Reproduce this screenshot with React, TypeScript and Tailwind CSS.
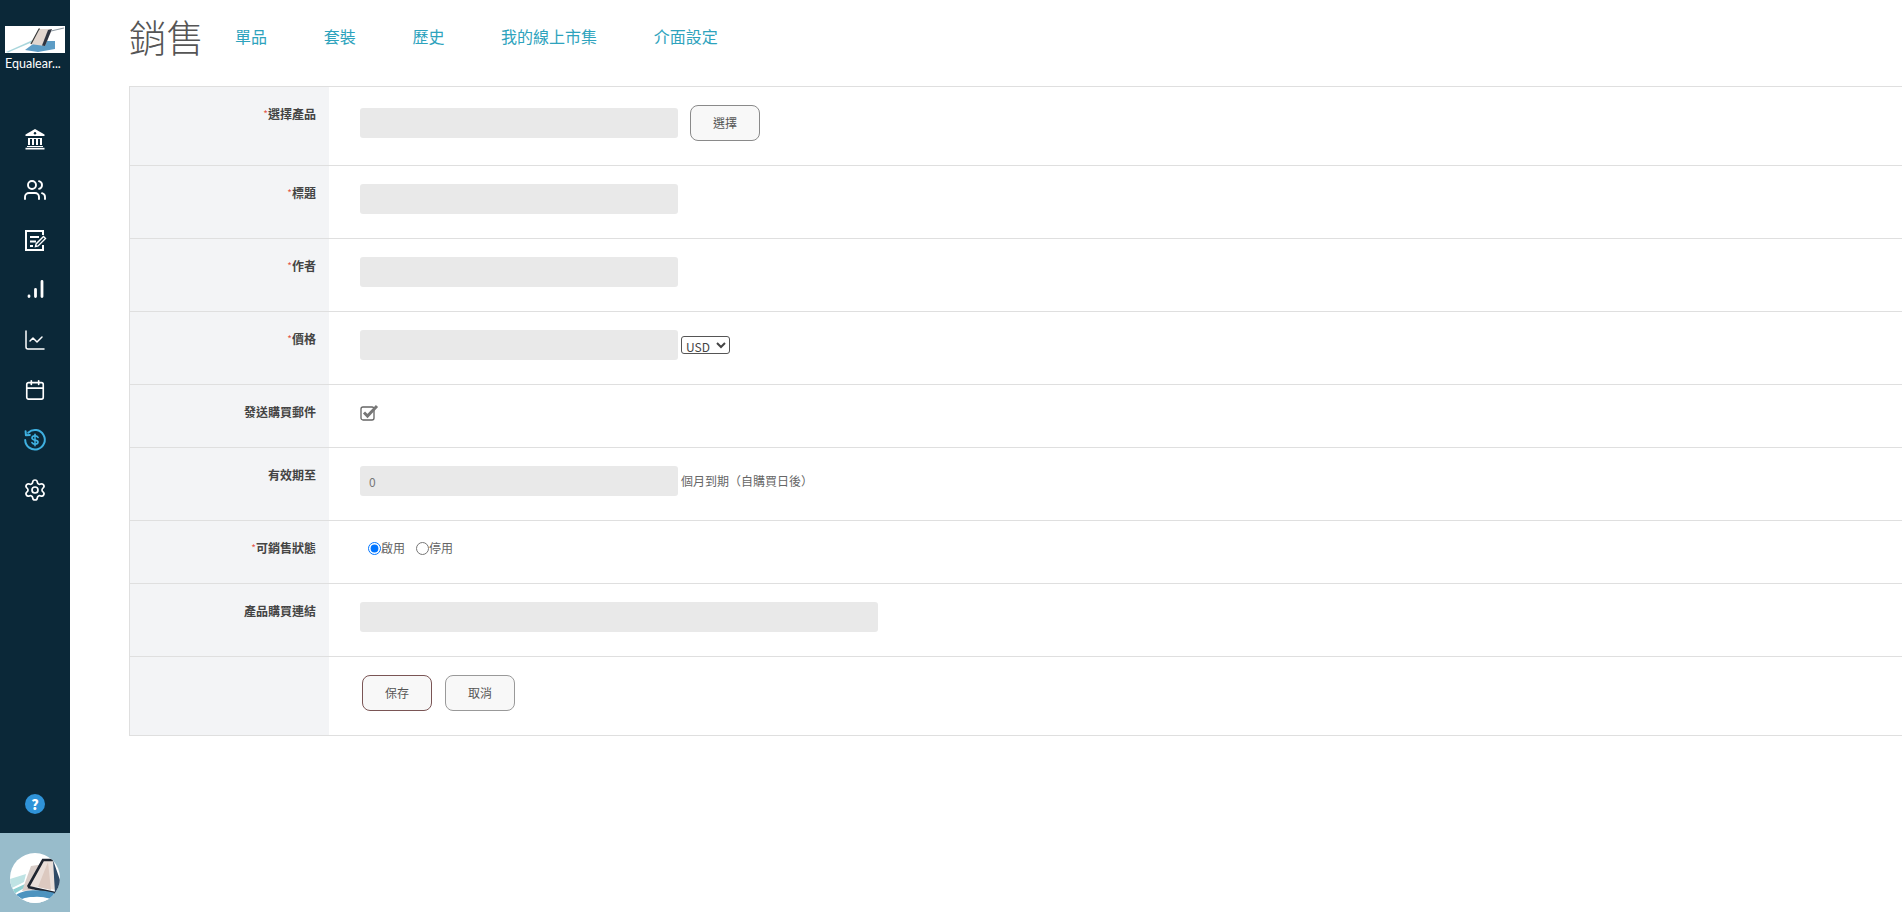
import React from "react";
import { Users, ChartLine, Calendar, Settings } from "lucide-react";

const Req = () => <span className="text-[#e4544a] font-normal text-[10px] align-top">*</span>;

function Row({ label, req, h, pt = "pt-[18px]", children, last }: { label?: string; req?: boolean; h: string; pt?: string; children?: React.ReactNode; last?: boolean }) {
  return (
    <div className={`flex ${h} ${last ? "" : "border-b border-[#dfdfdf]"}`}>
      <div className="w-[199px] shrink-0 bg-[#f3f4f6] pr-[13px] pt-[19px] text-right text-[12px] leading-[16px] font-bold text-[#444]">
        {req && <Req />}
        {label}
      </div>
      <div className={`flex-1 pl-[31px] ${pt}`}>{children}</div>
    </div>
  );
}

const Field = ({ w = "w-[318px]", value }: { w?: string; value?: string }) => (
  <input readOnly value={value ?? ""} className={`${w} h-[30px] rounded-[3px] bg-[#e9e9e9] px-[9px] text-[12px] text-[#777] outline-none`} />
);

const Btn = ({ children, cls = "border-[#8a8a8a]" }: { children: React.ReactNode; cls?: string }) => (
  <button className={`h-[36px] w-[70px] rounded-[8px] border bg-[#f8f8f8] text-[12px] text-[#555] ${cls}`}>{children}</button>
);

function Bank() {
  return (
    <svg width="24" height="24" viewBox="0 0 24 24" fill="none" className="block -translate-y-px">
      <path d="M12 2L2.5 7.5V9h19V7.5z" fill="#fff" />
      <circle cx="12" cy="6.3" r="1.2" fill="#0b2838" />
      <path d="M5 11h14v1H5z" fill="#fff" />
      <path d="M6 12v6M10 12v6M14 12v6M18 12v6" stroke="#fff" strokeWidth="2" />
      <path d="M4 19h16v1H4z" fill="#fff" />
      <path d="M2.5 20.8h19v1.7h-19z" fill="#fff" />
    </svg>
  );
}

function Bars() {
  return (
    <svg width="24" height="24" viewBox="0 0 24 24" fill="none" className="block" stroke="#fff" strokeWidth="2.8" strokeLinecap="round">
      <path d="M6 18.5v-.5M12.5 18.5v-7M19 18.5V3.5" />
    </svg>
  );
}

function Refund() {
  return (
    <svg width="24" height="24" viewBox="0 0 24 24" fill="none" stroke="#3fb0e0" strokeWidth="2" strokeLinecap="round" strokeLinejoin="round" className="block">
      <path d="M5.2 4.7A9.8 9.8 0 1 1 2.2 12" />
      <path d="M2.6 3.2l.3 4 4-.3" />
      <path d="M15 9.4c-.5-.9-1.6-1.5-3-1.5-1.8 0-3 .9-3 2.1 0 2.8 6 1.3 6 4 0 1.2-1.2 2.1-3 2.1-1.4 0-2.5-.6-3-1.5" strokeWidth="1.7" />
      <path d="M12 6.3v11.4" strokeWidth="1.5" />
    </svg>
  );
}

function PenNote() {
  return (
    <svg width="24" height="24" viewBox="0 0 24 24" fill="none" stroke="#fff" strokeWidth="2" className="block">
      <path d="M20 7V3H3v19h17v-5" />
      <path d="M7 9h9M7 13.5h6M7 18h3" strokeWidth="1.8" />
      <path d="M12.5 18.5l.6-2.6 7.4-7.4 2 2-7.4 7.4z" strokeWidth="1.4" fill="#0b2838" />
    </svg>
  );
}

function Logo() {
  return (
    <svg width="60" height="27" viewBox="0 0 60 27" className="block bg-white">
      <path d="M1 26L30 13l1 1.5L3 26.5z" fill="#a9d6dc" />
      <path d="M20 24l12-9h18v8l-17 3z" fill="#5d9cc5" />
      <path d="M25 18L35 3h12l-7 17z" fill="#e2d6cf" />
      <path d="M35 3h-1L26 18" stroke="#3a3a3a" strokeWidth="1.2" fill="none" />
      <path d="M47 3l-7 17-3-.6L43 4z" fill="#2f3440" />
      <path d="M46 5l13-3" stroke="#8f9aa2" strokeWidth="1.2" />
    </svg>
  );
}

function Avatar() {
  return (
    <svg width="50" height="50" viewBox="0 0 50 50" className="block rounded-full bg-white">
      <path d="M0 26l16-5-2 8L0 36z" fill="#bfe3e4" />
      <path d="M2 37l13-6-1 4-10 6z" fill="#8fd0d2" />
      <path d="M12 38l9-25 14-2-12 26z" fill="#d9cdc8" />
      <path d="M20 33L34 8h9l3 29z" fill="#eadfda" />
      <path d="M28 34L38 9l3 28z" fill="#dcc9c0" />
      <path d="M18 34L33 7h10M18 34l27 6" fill="none" stroke="#1f2530" strokeWidth="2.6" />
      <path d="M43 7l7 20v15l-5-2z" fill="#2f4a66" />
      <path d="M6 42c10-7 28-5 39-2l-5 6c-10-2-20-3-28 0z" fill="#4d93bf" />
      <path d="M14 46c8-3 18-3 26 0l-8 5H18z" fill="#fff" />
    </svg>
  );
}

export default function App() {
  const font = { fontFamily: '"Microsoft JhengHei", "Noto Sans CJK TC", "Noto Sans", sans-serif' };
  const icons = [
    <Bank key="a" />,
    <Users key="b" size={24} strokeWidth={1.9} />,
    <PenNote key="c" />,
    <Bars key="d" />,
    <ChartLine key="e" size={24} strokeWidth={1.5} />,
    <Calendar key="f" size={22} strokeWidth={1.8} />,
    <Refund key="g" />,
    <Settings key="h" size={24} strokeWidth={1.7} />,
  ];
  return (
    <div className="flex h-[912px] overflow-hidden bg-white" style={font}>
      <aside className="flex w-[70px] shrink-0 flex-col items-center bg-[#0b2838] text-white">
        <div className="mt-[26px]">
          <Logo />
        </div>
        <div className="mt-[3px] w-full truncate px-[5px] text-left text-[12.5px] leading-[16px] font-['Lato',sans-serif]">Equalear...</div>
        <nav className="mt-[43px] flex flex-col items-center">
          {icons.map((ic, i) => (
            <div key={i} className="flex h-[50px] items-center justify-center">{ic}</div>
          ))}
        </nav>
        <div className="mt-auto mb-[19px] flex h-[20px] w-[20px] items-center justify-center rounded-full bg-[#2f93d8] text-[14px] leading-none font-black">?</div>
        <div className="flex h-[79px] w-full items-center justify-center bg-[#98bccb] pt-[11px]">
          <Avatar />
        </div>
      </aside>
      <main className="min-w-0 flex-1 pl-[59px]">
        <header className="flex h-[86px] items-start">
          <h1 className="mt-[11px] w-[76px] text-[37.5px] leading-[50px] font-light text-[#555]">銷售</h1>
          <nav className="mt-[25px] ml-[30px] flex gap-[56.7px] text-[16px] leading-[22px] text-[#2ea3bd]">
            <a>單品</a>
            <a>套裝</a>
            <a>歷史</a>
            <a>我的線上市集</a>
            <a>介面設定</a>
          </nav>
        </header>
        <form className="border border-r-0 border-[#dfdfdf]">
          <Row label="選擇產品" req h="h-[79px]" pt="pt-[21px]">
            <div className="flex h-[30px] items-center gap-[12px]">
              <Field />
              <Btn>選擇</Btn>
            </div>
          </Row>
          <Row label="標題" req h="h-[73px]"><Field /></Row>
          <Row label="作者" req h="h-[73px]"><Field /></Row>
          <Row label="價格" req h="h-[73px]">
            <div className="flex items-center gap-[3px]">
              <Field />
              <select className="h-[18px] w-[49px] rounded-[3px] border border-[#555] bg-white text-[12px] leading-[14px] text-[#444]" defaultValue="USD">
                <option>USD</option>
              </select>
            </div>
          </Row>
          <Row label="發送購買郵件" h="h-[63px]" pt="pt-[19px]">
            <svg width="19" height="17" viewBox="0 0 19 17" fill="none" className="block">
              <rect x="1" y="3" width="13" height="13" rx="2" stroke="#666" strokeWidth="1.3" />
              <path d="M4 8.5l3.5 3.5L17 2" stroke="#777" strokeWidth="3" />
            </svg>
          </Row>
          <Row label="有效期至" h="h-[73px]">
            <div className="flex items-center gap-[3px]">
              <Field value="0" />
              <span className="text-[12px] text-[#666]">個月到期（自購買日後）</span>
            </div>
          </Row>
          <Row label="可銷售狀態" req h="h-[63px]" pt="pt-[19px]">
            <div className="flex h-[16px] items-center pl-[8px] text-[12px] text-[#666]">
              <input type="radio" name="s" defaultChecked className="m-0 h-[13px] w-[13px]" />
              <span className="mr-[11px]">啟用</span>
              <input type="radio" name="s" className="m-0 h-[13px] w-[13px]" />
              <span>停用</span>
            </div>
          </Row>
          <Row label="產品購買連結" h="h-[73px]"><Field w="w-[518px]" /></Row>
          <Row h="h-[78px]" pt="pt-[18px]" last>
            <div className="flex gap-[13px] pl-[2px]">
              <Btn cls="border-[#7a5555]">保存</Btn>
              <Btn cls="border-[#999]">取消</Btn>
            </div>
          </Row>
        </form>
      </main>
    </div>
  );
}
